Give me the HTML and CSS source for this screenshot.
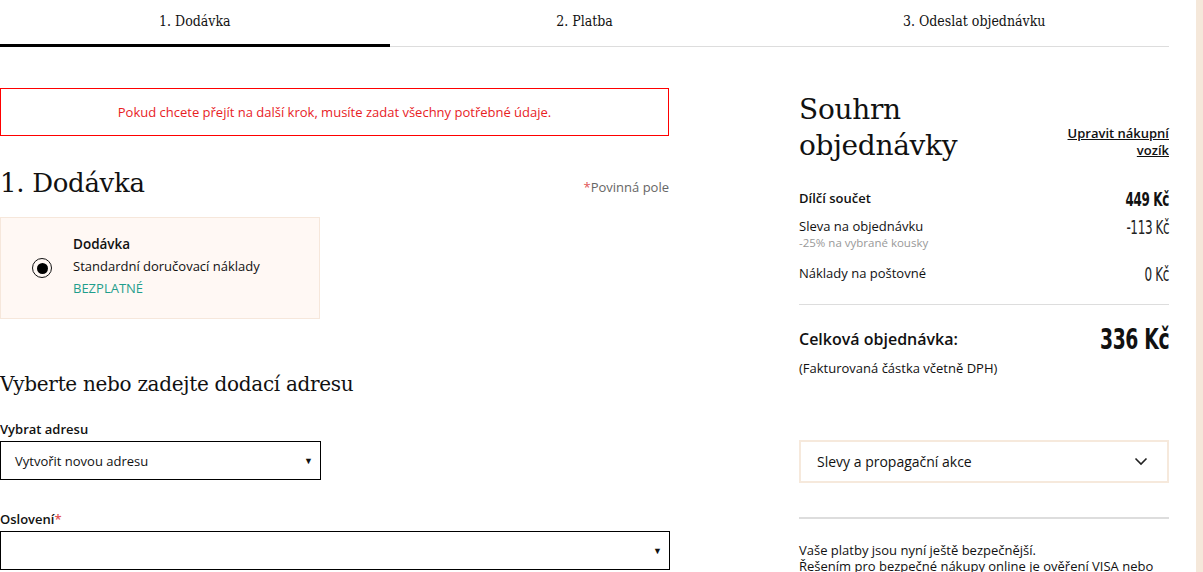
FILE: index.html
```html
<!DOCTYPE html>
<html lang="cs">
<head>
<meta charset="utf-8">
<title>Pokladna</title>
<link rel="stylesheet" href="styles.css">
</head>
<body>
<div class="page">
  <div class="main">
    <nav class="steps">
      <div class="step active">1. Dodávka</div>
      <div class="step">2. Platba</div>
      <div class="step">3. Odeslat objednávku</div>
    </nav>
    <div class="columns">
      <section class="left">
        <div class="error">Pokud chcete přejít na další krok, musíte zadat všechny potřebné údaje.</div>
        <div class="section-head">
          <h1 class="h1">1. Dodávka</h1>
          <span class="required"><span class="star">*</span>Povinná pole</span>
        </div>
        <div class="delivery">
          <span class="radio"><span class="dot"></span></span>
          <div class="delivery-text">
            <div class="d-title">Dodávka</div>
            <div class="d-desc">Standardní doručovací náklady</div>
            <div class="d-free">BEZPLATNÉ</div>
          </div>
        </div>
        <h2 class="h2">Vyberte nebo zadejte dodací adresu</h2>
        <label class="label">Vybrat adresu</label>
        <div class="select short">
          <span>Vytvořit novou adresu</span>
          <span class="caret">▼</span>
        </div>
        <label class="label label2">Oslovení<span class="star">*</span></label>
        <div class="select full">
          <span></span>
          <span class="caret">▼</span>
        </div>
      </section>
      <aside class="right">
        <div class="summary-head">
          <h2 class="summary-title">Souhrn<br>objednávky</h2>
          <a class="edit" href="#">Upravit nákupní<br>vozík</a>
        </div>
        <div class="row sub">
          <span class="r-label strong">Dílčí součet</span>
          <span class="price bold">449 Kč</span>
        </div>
        <div class="row">
          <span class="r-label">Sleva na objednávku<span class="note">-25% na vybrané kousky</span></span>
          <span class="price">-113 Kč</span>
        </div>
        <div class="row ship">
          <span class="r-label">Náklady na poštovné</span>
          <span class="price">0 Kč</span>
        </div>
        <div class="total">
          <span class="t-label">Celková objednávka:</span>
          <span class="t-price">336 Kč</span>
        </div>
        <div class="vat">(Fakturovaná částka včetně DPH)</div>
        <div class="promo">
          <span>Slevy a propagační akce</span>
          <svg class="chev" width="14" height="9" viewBox="0 0 14 9"><path d="M1.5 1.5 L7 7 L12.5 1.5" fill="none" stroke="#222" stroke-width="1.6"/></svg>
        </div>
        <div class="secure">Vaše platby jsou nyní ještě bezpečnější.<br>Řešením pro bezpečné nákupy online je ověření VISA nebo</div>
      </aside>
    </div>
  </div>
  <div class="stripe"></div>
</div>
</body>
</html>
```
FILE: styles.css
```css
html, body {
  margin: 0;
  padding: 0;
  background: #fff;
  height: 100%;
  overflow: hidden;
}
body {
  font-family: "Open Sans", "Noto Sans", sans-serif;
  color: #111;
}
.page {
  display: flex;
  height: 572px;
}
.main {
  width: 1196px;
  flex: none;
}
.stripe {
  flex: 1;
  background: #f5e8da;
}
.steps {
  width: 1169px;
  display: grid;
  grid-template-columns: 1fr 1fr 1fr;
  border-bottom: 1px solid #ddd;
}
.step {
  font-family: "DejaVu Serif Condensed", "DejaVu Serif", serif;
  font-size: 14px;
  text-align: center;
  height: 44px;
  line-height: 42px;
  color: #111;
  border-bottom: 3px solid transparent;
  margin-bottom: -1px;
}
.step.active {
  border-bottom-color: #000;
}
.columns {
  width: 1169px;
  display: flex;
  justify-content: space-between;
}
.left {
  width: 669px;
  padding-top: 41px;
}
.error {
  border: 1px solid #f00;
  height: 46px;
  line-height: 46px;
  text-align: center;
  color: #e8221f;
  font-size: 13px;
}
.section-head {
  display: flex;
  justify-content: space-between;
  align-items: baseline;
  margin-top: 29px;
}
.h1 {
  font-family: "DejaVu Serif", serif;
  font-weight: normal;
  font-size: 26px;
  margin: 0;
  line-height: 36px;
  letter-spacing: -0.3px;
}
.required {
  font-size: 13px;
  color: #666;
}
.star {
  color: #e05555;
}
.delivery {
  margin-top: 16px;
  width: 318px;
  height: 100px;
  background: #fff8f4;
  border: 1px solid #f6e7db;
  display: flex;
  align-items: center;
}
.radio {
  width: 18px;
  height: 18px;
  border: 1.5px solid #111;
  border-radius: 50%;
  margin-left: 31px;
  margin-right: 21px;
  display: flex;
  align-items: center;
  justify-content: center;
  flex: none;
}
.dot {
  width: 11px;
  height: 11px;
  border-radius: 50%;
  background: #000;
}
.delivery-text {
  font-size: 13px;
  line-height: 22px;
  margin-top: -3px;
}
.d-title {
  font-weight: 600;
  font-size: 13.5px;
  line-height: 21px;
}
.d-free {
  color: #1f9e8c;
}
.h2 {
  font-family: "DejaVu Serif", serif;
  font-weight: normal;
  font-size: 20px;
  margin: 50px 0 0;
  line-height: 30px;
  letter-spacing: -0.3px;
}
.label {
  display: block;
  font-size: 13px;
  font-weight: 600;
  margin-top: 21px;
  line-height: 18px;
}
.label2 {
  margin-top: 30px;
}
.select {
  margin-top: 3px;
  height: 37px;
  border: 1.5px solid #000;
  display: flex;
  align-items: center;
  justify-content: space-between;
  padding: 0 7px 0 14px;
  font-size: 13px;
  box-sizing: content-box;
}
.select.short {
  width: 298px;
}
.select.full {
  width: 647px;
}
.caret {
  font-size: 9px;
}
.right {
  width: 370px;
  padding-top: 45px;
}
.summary-head {
  display: flex;
  justify-content: space-between;
  align-items: flex-start;
}
.summary-title {
  font-family: "DejaVu Serif", serif;
  font-weight: normal;
  font-size: 28px;
  line-height: 36px;
  margin: 0;
  letter-spacing: -0.3px;
}
.edit {
  font-size: 13px;
  font-weight: 600;
  color: #111;
  text-align: right;
  line-height: 17px;
  margin-top: 33px;
}
.row {
  display: flex;
  justify-content: space-between;
  align-items: flex-start;
  font-size: 13px;
  margin-top: 8px;
}
.row.sub {
  margin-top: 25px;
}
.row.ship {
  margin-top: 14px;
  padding-bottom: 20px;
  border-bottom: 1px solid #ddd;
}
.r-label {
  line-height: 18px;
}
.strong {
  font-weight: 600;
}
.note {
  display: block;
  font-size: 11.5px;
  color: #999;
  line-height: 15px;
}
.price {
  display: inline-block;
  font-family: "DejaVu Sans", sans-serif;
  font-stretch: condensed;
  font-size: 19px;
  line-height: 20px;
  color: #222;
  transform: scaleX(0.7);
  transform-origin: right center;
  letter-spacing: -0.5px;
}
.price.bold {
  font-weight: bold;
  color: #111;
}
.total {
  display: flex;
  justify-content: space-between;
  align-items: center;
  margin-top: 18px;
}
.t-label {
  font-size: 16px;
  font-weight: 600;
}
.t-price {
  display: inline-block;
  font-family: "DejaVu Sans", sans-serif;
  font-stretch: condensed;
  font-weight: bold;
  font-size: 29px;
  line-height: 32px;
  transform: scaleX(0.72);
  transform-origin: right center;
  letter-spacing: -0.5px;
}
.vat {
  font-size: 13px;
  margin-top: 4px;
}
.promo {
  margin-top: 63px;
  height: 39px;
  border: 2px solid #f6e9dc;
  display: flex;
  align-items: center;
  justify-content: space-between;
  padding: 0 19px 0 16px;
  font-size: 14px;
}
.secure {
  margin-top: 34px;
  border-top: 2px solid #ddd;
  padding-top: 23px;
  font-size: 13px;
  line-height: 16px;
}
```
